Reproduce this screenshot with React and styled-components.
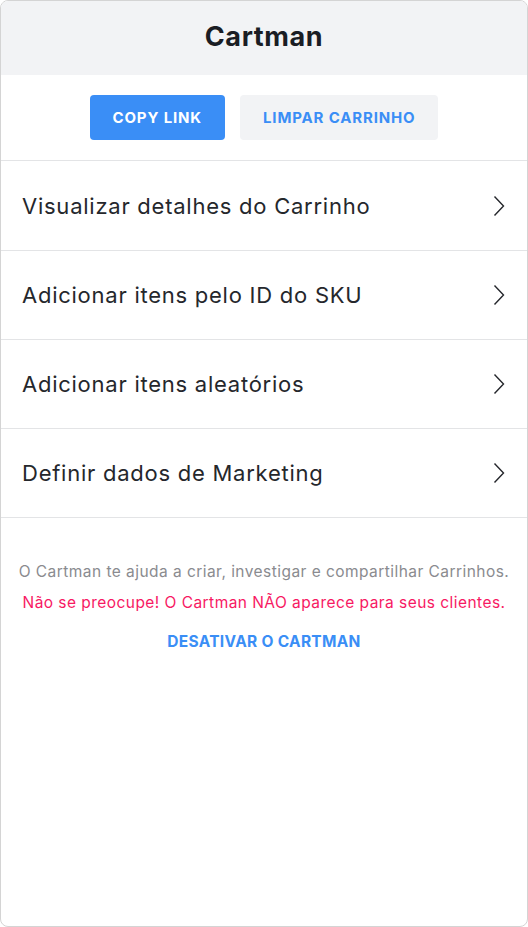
import styled, { createGlobalStyle } from "styled-components";

const Global = createGlobalStyle`
  html, body {
    margin: 0;
    padding: 0;
    background: #fff;
  }
  body {
    font-family: "Inter", "Noto Sans", sans-serif;
    -webkit-font-smoothing: antialiased;
  }
`;

const Panel = styled.div`
  box-sizing: border-box;
  width: 528px;
  height: 927px;
  border: 1px solid #d4d4d4;
  border-radius: 8px;
  overflow: hidden;
  display: flex;
  flex-direction: column;
`;

const Header = styled.header`
  height: 74px;
  flex-shrink: 0;
  background: #f2f3f5;
  display: flex;
  align-items: center;
  justify-content: center;
`;

const Title = styled.h1`
  margin: 0 0 3px;
  font-size: 27px;
  font-weight: 700;
  letter-spacing: 0.6px;
  color: #1a1d24;
`;

const Actions = styled.div`
  display: flex;
  justify-content: center;
  gap: 15px;
  padding: 20px 0;
  border-bottom: 1px solid #e3e4e6;
`;

const Button = styled.button`
  height: 45px;
  padding: 0 23px;
  border: none;
  border-radius: 4px;
  font-family: inherit;
  font-size: 15px;
  font-weight: 700;
  letter-spacing: 0.85px;
  background: ${(p) => (p.$primary ? "#3a8ef6" : "#f2f3f5")};
  color: ${(p) => (p.$primary ? "#fff" : "#3a8ef6")};
  cursor: pointer;
`;

const Row = styled.div`
  height: 88px;
  flex-shrink: 0;
  display: flex;
  align-items: center;
  justify-content: space-between;
  padding: 0 22px 0 21px;
  border-bottom: 1px solid #e3e4e6;
  font-size: 22px;
  letter-spacing: 0.75px;
  color: #25272c;
  cursor: pointer;

  ${Actions} + & {
    height: 89px;
  }
`;

const Footer = styled.div`
  padding-top: 44px;
  display: flex;
  flex-direction: column;
  align-items: center;
  font-size: 15.5px;
  letter-spacing: 0.45px;
`;

const Note = styled.p`
  margin: 0 0 12px;
  color: ${(p) => p.$color};
`;

const Link = styled.a`
  margin-top: 8px;
  font-weight: 700;
  letter-spacing: 0.3px;
  color: #3a8ef6;
  text-decoration: none;
`;

const Chevron = () => (
  <svg width="12" height="22" viewBox="0 0 12 22" fill="none">
    <path d="M1.5 1.5 L10.5 11 L1.5 20.5" stroke="#25272c" strokeWidth="1.4" />
  </svg>
);

const items = [
  "Visualizar detalhes do Carrinho",
  "Adicionar itens pelo ID do SKU",
  "Adicionar itens aleatórios",
  "Definir dados de Marketing",
];

export default function App() {
  return (
    <>
      <Global />
      <Panel>
        <Header>
          <Title>Cartman</Title>
        </Header>
        <Actions>
          <Button $primary>COPY LINK</Button>
          <Button>LIMPAR CARRINHO</Button>
        </Actions>
        {items.map((label) => (
          <Row key={label}>
            {label}
            <Chevron />
          </Row>
        ))}
        <Footer>
          <Note $color="#8a8b8f">
            O Cartman te ajuda a criar, investigar e compartilhar Carrinhos.
          </Note>
          <Note $color="#f71963">
            Não se preocupe! O Cartman NÃO aparece para seus clientes.
          </Note>
          <Link href="#">DESATIVAR O CARTMAN</Link>
        </Footer>
      </Panel>
    </>
  );
}
